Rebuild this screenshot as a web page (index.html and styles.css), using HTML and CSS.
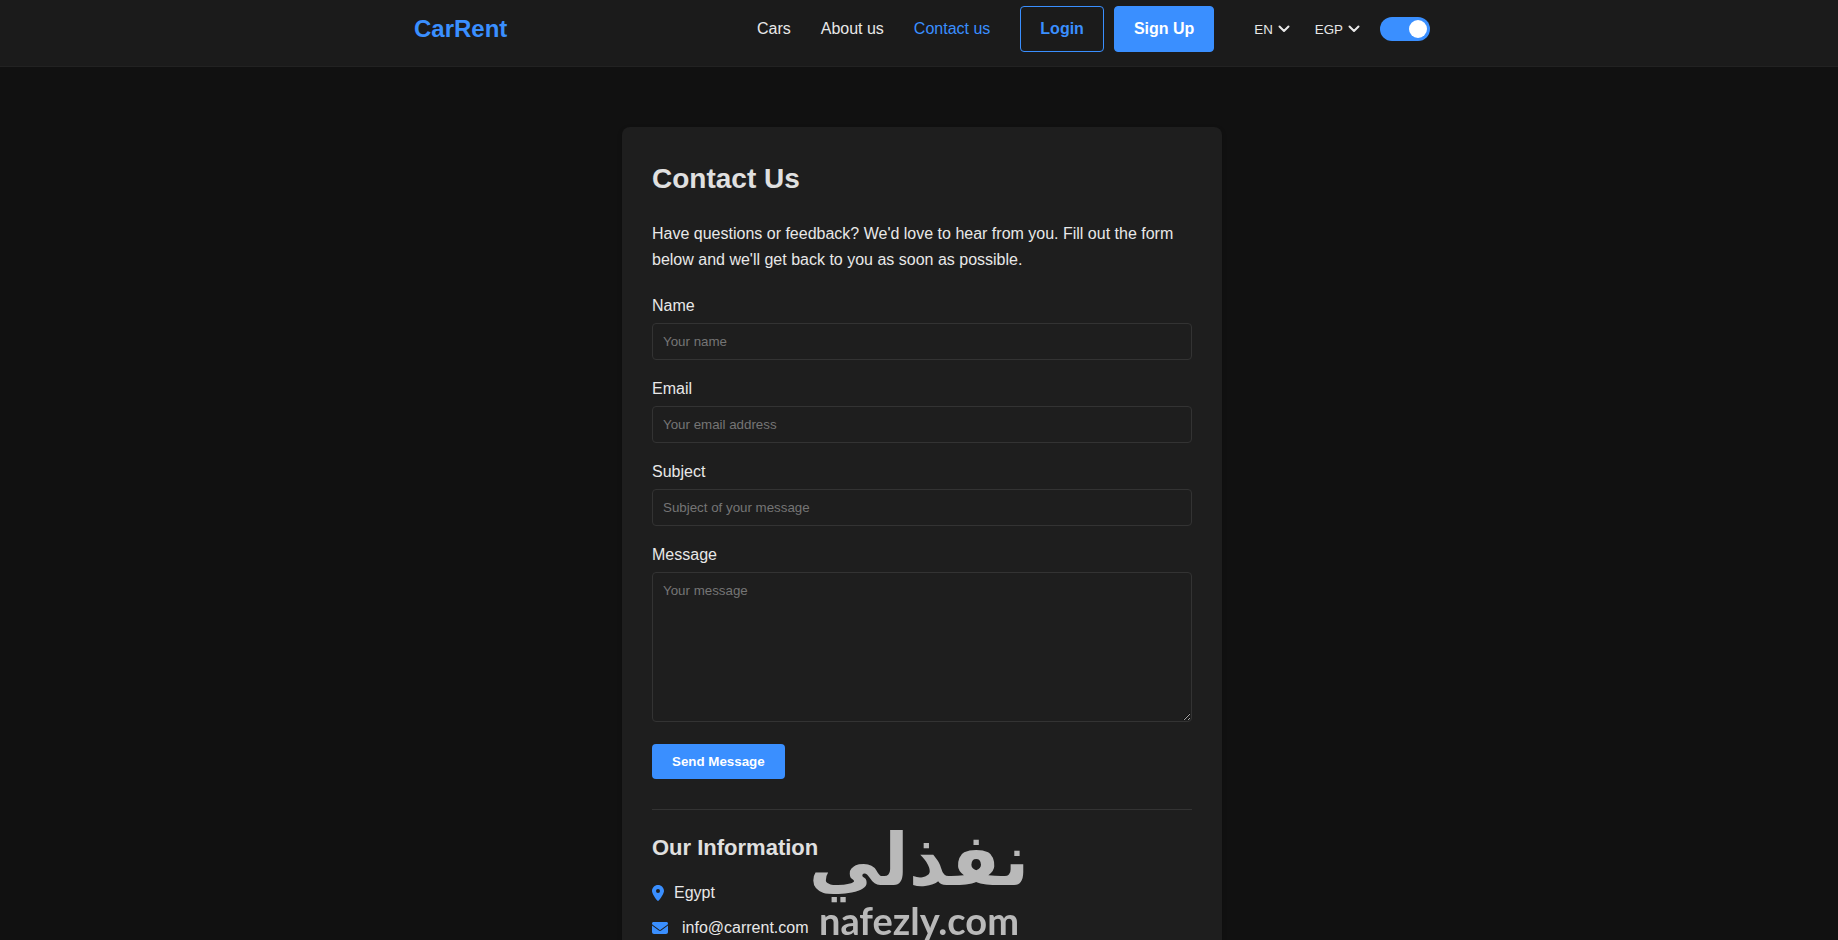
FILE: index.html
```html
<!DOCTYPE html>
<html lang="en">

<head>
    <meta charset="UTF-8">
    <meta name="viewport" content="width=device-width, initial-scale=1.0">
    <title>CarRent - Contact Us</title>
    <link rel="stylesheet" href="styles.css">
</head>

<body>
    <header class="navbar">
        <div class="nav-container">
            <a href="#" class="logo">CarRent</a>
            <nav class="nav-links">
                <a href="#">Cars</a>
                <a href="#">About us</a>
                <a href="#" class="active">Contact us</a>
            </nav>
            <div class="auth-buttons">
                <button type="button" class="btn btn-outline">Login</button>
                <button type="button" class="btn btn-primary">Sign Up</button>
            </div>
            <div class="nav-options">
                <button type="button" class="dropdown-btn">EN
                    <svg viewBox="0 0 12 8" aria-hidden="true"><path d="M1.5 1.5L6 6l4.5-4.5" /></svg>
                </button>
                <button type="button" class="dropdown-btn">EGP
                    <svg viewBox="0 0 12 8" aria-hidden="true"><path d="M1.5 1.5L6 6l4.5-4.5" /></svg>
                </button>
            </div>
            <input type="checkbox" class="theme-switch" aria-label="Dark mode" checked>
        </div>
    </header>

    <main>
        <section class="contact-card">
            <h1>Contact Us</h1>
            <p class="intro">Have questions or feedback? We'd love to hear from you. Fill out the form below and we'll get back to you as soon as possible.</p>

            <form id="contact-form">
                <div class="form-group">
                    <label for="name">Name</label>
                    <input type="text" id="name" placeholder="Your name" required>
                </div>
                <div class="form-group">
                    <label for="email">Email</label>
                    <input type="email" id="email" placeholder="Your email address" required>
                </div>
                <div class="form-group">
                    <label for="subject">Subject</label>
                    <input type="text" id="subject" placeholder="Subject of your message" required>
                </div>
                <div class="form-group">
                    <label for="message">Message</label>
                    <textarea id="message" placeholder="Your message" required></textarea>
                </div>
                <button type="submit" class="btn-send">Send Message</button>
            </form>

            <div class="contact-info">
                <h2>Our Information</h2>
                <p class="info-row">
                    <svg class="pin" viewBox="0 0 384 512" aria-hidden="true"><path d="M215.7 499.2C267 435 384 279.4 384 192 384 86 298 0 192 0S0 86 0 192c0 87.4 117 243 168.300 307.200 12.300 15.300 35.100 15.300 47.400 0zM192 128a64 64 0 1 1 0 128 64 64 0 1 1 0-128z" /></svg>
                    Egypt
                </p>
                <p class="info-row">
                    <svg class="mail" viewBox="0 0 512 384" aria-hidden="true"><path d="M48 0C21.500 0 0 21.500 0 48c0 15.100 7.100 29.300 19.200 38.400l217.600 163.200c11.400 8.500 27 8.500 38.400 0L492.800 86.400C504.900 77.300 512 63.100 512 48c0-26.500-21.500-48-48-48zM0 112v208c0 35.300 28.700 64 64 64h384c35.300 0 64-28.700 64-64V112L294.400 275.200c-22.800 17.100-54 17.100-76.800 0z" /></svg>
                    info@carrent.com
                </p>
            </div>
        </section>
    </main>

    <div class="watermark">
        <span class="watermark-ar" lang="ar" dir="rtl">نفذلي</span>
        <span class="watermark-en">nafezly.com</span>
    </div>
</body>

</html>
```

FILE: styles.css
```css
* {
    box-sizing: border-box;
}

body {
    margin: 0;
    font-family: Arial, "Liberation Sans", sans-serif;
    font-size: 16px;
    line-height: 26px;
    color: #e8e8e8;
    background-color: #111;
}

a {
    color: inherit;
    text-decoration: none;
}

button {
    font-family: inherit;
    cursor: pointer;
}

/* Navbar */
.navbar {
    padding: 6px 0 14px 6px;
    background-color: #1b1b1b;
    border-bottom: 1px solid #222;
}

.nav-container {
    display: flex;
    align-items: center;
    max-width: 1016px;
    margin: 0 auto;
}

.logo {
    margin-right: auto;
    font-size: 24px;
    font-weight: bold;
    color: #3a8fff;
}

.nav-links {
    display: flex;
    gap: 30px;
}

.nav-links .active {
    color: #3a8fff;
}

.auth-buttons {
    display: flex;
    gap: 10px;
    margin: 0 40px 0 30px;
}

.btn {
    height: 46px;
    padding: 0 19px;
    border: 1px solid #3a8fff;
    border-radius: 4px;
    font-size: 16px;
    font-weight: bold;
}

.btn-outline {
    background-color: transparent;
    color: #3a8fff;
}

.btn-primary {
    background-color: #3a8fff;
    color: #fff;
}

.nav-options {
    display: flex;
    gap: 25px;
    margin-right: 20px;
}

.dropdown-btn {
    display: flex;
    align-items: center;
    gap: 5px;
    padding: 0;
    border: none;
    background: none;
    color: #e8e8e8;
}

.dropdown-btn svg {
    width: 12px;
    height: 8px;
    fill: none;
    stroke: currentColor;
    stroke-width: 2;
    stroke-linecap: round;
    stroke-linejoin: round;
}

.theme-switch {
    appearance: none;
    display: flex;
    align-items: center;
    width: 50px;
    height: 24px;
    margin: 0;
    padding: 3px;
    border-radius: 12px;
    background-color: #444;
    cursor: pointer;
}

.theme-switch::before {
    content: "";
    width: 18px;
    height: 18px;
    border-radius: 50%;
    background-color: #fff;
}

.theme-switch:checked {
    justify-content: flex-end;
    background-color: #3a8fff;
}

/* Contact card */
main {
    padding: 60px 0 60px 6px;
}

.contact-card {
    max-width: 600px;
    margin: 0 auto;
    padding: 30px;
    border-radius: 8px;
    background-color: #1e1e1e;
    box-shadow: 0 2px 5px rgba(0, 0, 0, 0.2);
}

h1 {
    margin: 0 0 20px;
    font-size: 28px;
    line-height: 44px;
    color: #e0e0e0;
}

.intro {
    margin: 0 0 20px;
}

.form-group {
    margin-bottom: 16px;
}

.form-group label {
    display: block;
    margin-bottom: 4px;
}

.form-group input,
.form-group textarea {
    display: block;
    width: 100%;
    height: 37px;
    padding: 10px;
    border: 1px solid #333;
    border-radius: 4px;
    background-color: #1e1e1e;
    font-family: inherit;
    color: #e8e8e8;
}

.form-group textarea {
    height: 150px;
    resize: vertical;
}

.form-group ::placeholder {
    color: #757575;
}

.btn-send {
    display: block;
    height: 35px;
    margin-top: 22px;
    padding: 0 20px;
    border: none;
    border-radius: 4px;
    background-color: #3a8fff;
    font-weight: bold;
    color: #fff;
}

.contact-info {
    margin-top: 30px;
    padding-top: 20px;
    border-top: 1px solid #333;
}

h2 {
    margin: 0 0 14px;
    font-size: 22px;
    line-height: 36px;
    color: #e0e0e0;
}

.info-row {
    display: flex;
    align-items: center;
    gap: 10px;
    margin: 0 0 9px;
}

.info-row svg {
    fill: #3a8fff;
}

.pin {
    width: 12px;
    height: 16px;
}

.mail {
    width: 16px;
    height: 12px;
    margin-right: 4px;
}

/* Watermark */
.watermark {
    position: fixed;
    left: 50%;
    bottom: 0;
    display: flex;
    flex-direction: column;
    align-items: center;
    transform: translateX(-50%);
    color: #b9b9b9;
    pointer-events: none;
}

.watermark-ar {
    font-family: "DejaVu Sans", sans-serif;
    font-size: 72px;
    font-weight: bold;
    line-height: 80px;
}

.watermark-en {
    font-family: Lato, sans-serif;
    font-size: 38px;
    font-weight: bold;
    line-height: 40px;
}
```
